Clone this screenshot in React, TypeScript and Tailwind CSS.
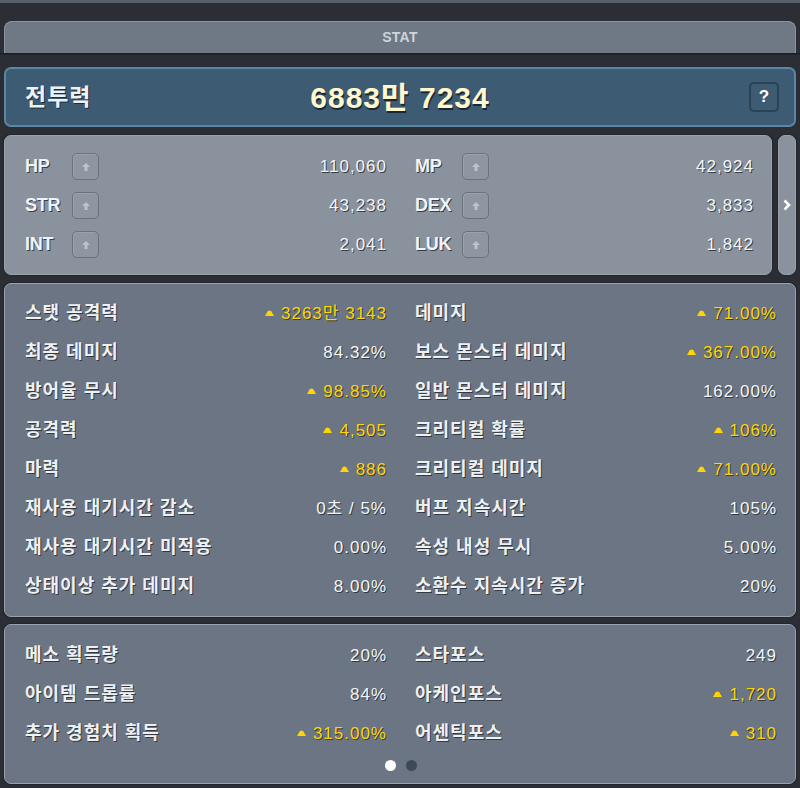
import type { ReactNode } from 'react'

const FONT = "font-['Liberation_Sans','Noto_Sans_CJK_KR',sans-serif]"

interface Row {
  label: string
  value: string
  up?: boolean
}

const BASE_LEFT: Row[] = [
  { label: 'HP', value: '110,060' },
  { label: 'STR', value: '43,238' },
  { label: 'INT', value: '2,041' },
]

const BASE_RIGHT: Row[] = [
  { label: 'MP', value: '42,924' },
  { label: 'DEX', value: '3,833' },
  { label: 'LUK', value: '1,842' },
]

const DETAIL: [Row, Row][] = [
  [{ label: '스탯 공격력', value: '3263만 3143', up: true }, { label: '데미지', value: '71.00%', up: true }],
  [{ label: '최종 데미지', value: '84.32%' }, { label: '보스 몬스터 데미지', value: '367.00%', up: true }],
  [{ label: '방어율 무시', value: '98.85%', up: true }, { label: '일반 몬스터 데미지', value: '162.00%' }],
  [{ label: '공격력', value: '4,505', up: true }, { label: '크리티컬 확률', value: '106%', up: true }],
  [{ label: '마력', value: '886', up: true }, { label: '크리티컬 데미지', value: '71.00%', up: true }],
  [{ label: '재사용 대기시간 감소', value: '0초 / 5%' }, { label: '버프 지속시간', value: '105%' }],
  [{ label: '재사용 대기시간 미적용', value: '0.00%' }, { label: '속성 내성 무시', value: '5.00%' }],
  [{ label: '상태이상 추가 데미지', value: '8.00%' }, { label: '소환수 지속시간 증가', value: '20%' }],
]

const EXTRA: [Row, Row][] = [
  [{ label: '메소 획득량', value: '20%' }, { label: '스타포스', value: '249' }],
  [{ label: '아이템 드롭률', value: '84%' }, { label: '아케인포스', value: '1,720', up: true }],
  [{ label: '추가 경험치 획득', value: '315.00%', up: true }, { label: '어센틱포스', value: '310', up: true }],
]

const shadow = '[text-shadow:1px_1px_0_rgba(40,46,56,0.85)]'

function UpTriangle() {
  return (
    <svg width="9" height="6" viewBox="0 0 9 6" className="mr-[7px] mt-[-2px]">
      <path d="M0 6 L2.5 1.5 Q4.5 -0.5 6.5 1.5 L9 6 Z" fill="#ffd400" />
    </svg>
  )
}

function StatLine({ row }: { row: Row }) {
  return (
    <div className="flex h-[39px] items-center justify-between">
      <span className={`text-[18px] font-bold tracking-[1px] text-[#eef0f2] ${shadow}`}>{row.label}</span>
      <span
        className={`flex items-center text-[17px] tracking-[1px] ${row.up ? 'text-[#ffd700]' : 'text-[#f4f5f6]'} ${shadow}`}
      >
        {row.up && <UpTriangle />}
        {row.value}
      </span>
    </div>
  )
}

function UpButton() {
  return (
    <div className="flex h-[27px] w-[27px] items-center justify-center rounded-[5px] border border-[#6a737d] bg-[#8d96a1] shadow-[inset_1px_1px_0_rgba(255,255,255,0.12)]">
      <svg width="10" height="10" viewBox="0 0 10 10">
        <path d="M5 1 L9 5 L6.5 5 L6.5 9 L3.5 9 L3.5 5 L1 5 Z" fill="#bcc3cb" />
      </svg>
    </div>
  )
}

function BaseLine({ row }: { row: Row }) {
  return (
    <div className="flex h-[39px] items-center">
      <span className={`w-[47px] text-[18px] font-bold tracking-[-0.3px] text-[#f2f3f5] ${shadow}`}>{row.label}</span>
      <UpButton />
      <span className={`ml-auto text-[17px] tracking-[1px] text-[#f4f5f6] ${shadow}`}>{row.value}</span>
    </div>
  )
}

function Panel({ children, className }: { children: ReactNode; className?: string }) {
  return (
    <div
      className={`rounded-[7px] border border-[#9aa3ad] shadow-[0_0_0_1px_#23262c] ${className ?? ''}`}
    >
      {children}
    </div>
  )
}

export default function App() {
  return (
    <div className={`${FONT} flex h-[788px] w-[800px] flex-col bg-[#2b2e35] px-[4px] pb-[4px]`}>
      {/* top edge */}
      <div className="mx-[-4px] h-[3px] bg-[#596069]" />
      <div className="h-[18px]" />

      {/* tab */}
      <div className="flex h-[32px] items-center justify-center rounded-t-[8px] border border-b-0 border-[#8c959f] bg-[#6f7985]">
        <span className="text-[14px] font-bold tracking-[0.3px] text-[#cfd3d8]">STAT</span>
      </div>
      <div className="mx-[-4px] h-[2px] bg-[#1f2227]" />
      <div className="h-[12px]" />

      {/* combat power */}
      <div className="grid h-[60px] grid-cols-[1fr_auto_1fr] items-center rounded-[7px] border-2 border-[#5a87a6] bg-[#3d5b72] px-[15px]">
        <span className="ml-[4px] text-[23px] font-bold tracking-[1px] text-[#eef1f4] [text-shadow:1px_1px_0_rgba(20,30,40,0.8)]">전투력</span>
        <span className="text-[30px] font-bold tracking-[1px] text-[#fff8cf] [text-shadow:1px_2px_0_rgba(20,30,40,0.85)]">
          6883만 7234
        </span>
        <div className="flex justify-end">
          <div className="flex h-[30px] w-[30px] items-center justify-center rounded-[5px] border-2 border-[#2a4253] bg-[#3d5b72]">
            <span className="text-[17px] font-bold text-white">?</span>
          </div>
        </div>
      </div>
      <div className="h-[8px]" />

      {/* base stats */}
      <div className="flex h-[140px] gap-[6px]">
        <Panel className="grid flex-1 grid-cols-[362px_1fr] gap-x-[28px] bg-[#89929d] py-[11px] pl-[20px] pr-[17px]">
          <div className="flex flex-col">
            {BASE_LEFT.map(r => (
              <BaseLine key={r.label} row={r} />
            ))}
          </div>
          <div className="flex flex-col">
            {BASE_RIGHT.map(r => (
              <BaseLine key={r.label} row={r} />
            ))}
          </div>
        </Panel>
        <Panel className="flex w-[18px] items-center justify-center bg-[#89929d]">
          <svg width="8" height="12" viewBox="0 0 8 12">
            <path d="M1.5 1.5 L6 6 L1.5 10.5" stroke="#ffffff" strokeWidth="2.6" fill="none" />
          </svg>
        </Panel>
      </div>
      <div className="h-[8px]" />

      {/* detail stats */}
      <Panel className="grid h-[334px] grid-cols-[362px_1fr] gap-x-[28px] bg-[#6b7583] pb-[11px] pl-[20px] pr-[18px] pt-[10px]">
        {DETAIL.map(([l, r]) => (
          <div key={l.label} className="contents">
            <StatLine row={l} />
            <StatLine row={r} />
          </div>
        ))}
      </Panel>
      <div className="h-[7px]" />

      {/* extra stats */}
      <Panel className="flex flex-1 flex-col bg-[#6b7583] pl-[20px] pr-[18px] pt-[11px]">
        <div className="grid grid-cols-[362px_1fr] gap-x-[28px]">
          {EXTRA.map(([l, r]) => (
            <div key={l.label} className="contents">
              <StatLine row={l} />
              <StatLine row={r} />
            </div>
          ))}
        </div>
        <div className="mt-[7px] flex justify-center gap-[10px]">
          <div className="h-[11px] w-[11px] rounded-full bg-white" />
          <div className="h-[11px] w-[11px] rounded-full bg-[#3e4a5a]" />
        </div>
      </Panel>
    </div>
  )
}
